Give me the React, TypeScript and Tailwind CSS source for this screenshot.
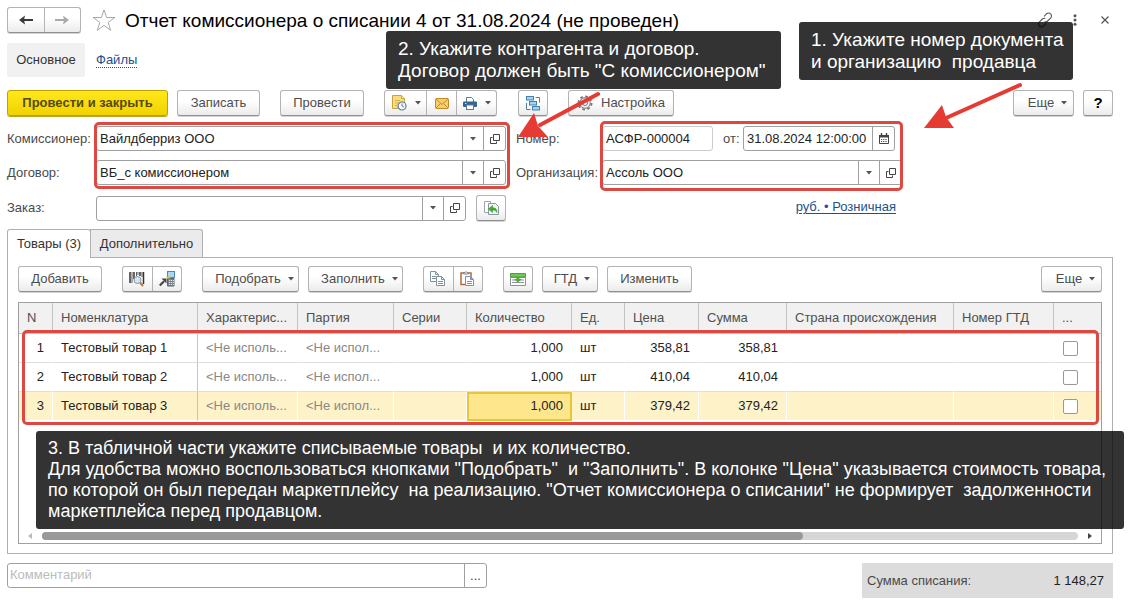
import React from "react";
import clsx from "clsx";

type Align = "left" | "right";

const columns: { title: string; width: string; align?: Align }[] = [
  { title: "N", width: "w-[34px]", align: "right" },
  { title: "Номенклатура", width: "w-[145px]" },
  { title: "Характерис...", width: "w-[100px]" },
  { title: "Партия", width: "w-[96px]" },
  { title: "Серии", width: "w-[73px]" },
  { title: "Количество", width: "w-[105px]", align: "right" },
  { title: "Ед.", width: "w-[53px]" },
  { title: "Цена", width: "w-[74px]", align: "right" },
  { title: "Сумма", width: "w-[88px]", align: "right" },
  { title: "Страна происхождения", width: "" },
  { title: "Номер ГТД", width: "w-[100px]" },
  { title: "...", width: "w-[47px]" },
];

const rows = [
  ["1", "Тестовый товар 1", "<Не исполь...", "<Не испол...", "", "1,000", "шт", "358,81", "358,81", "", ""],
  ["2", "Тестовый товар 2", "<Не исполь...", "<Не испол...", "", "1,000", "шт", "410,04", "410,04", "", ""],
  ["3", "Тестовый товар 3", "<Не исполь...", "<Не испол...", "", "1,000", "шт", "379,42", "379,42", "", ""],
];

function Caret({ className }: { className?: string }) {
  return (
    <svg viewBox="0 0 6 4" className={clsx("h-[4px] w-[6px] shrink-0", className)} aria-hidden="true">
      <path d="M0 0h6L3 3.6z" fill="#555" />
    </svg>
  );
}

function OpenIcon() {
  return (
    <svg viewBox="0 0 10 10" className="h-[10px] w-[10px]" fill="none" stroke="#444" aria-hidden="true">
      <path d="M3.5.5h6v6h-6z" />
      <path d="M2.5 3.5h-2v6h6v-2" />
    </svg>
  );
}

const buttonLook =
  "border border-[#b3b3b3] border-b-[#8f8f8f] bg-linear-to-b from-white from-40% to-[#ececec] text-[#4d4d4d] shadow-[0_1px_0_#d4d4d4]";

function Button({
  children,
  className,
  label,
}: {
  children: React.ReactNode;
  className?: string;
  label?: string;
}) {
  return (
    <button
      type="button"
      aria-label={label}
      className={clsx(
        "flex h-[26px] shrink-0 items-center justify-center rounded-[3px] whitespace-nowrap",
        buttonLook,
        className
      )}
    >
      {children}
    </button>
  );
}

function ButtonGroup({ children, className }: { children: React.ReactNode; className?: string }) {
  return (
    <div
      className={clsx(
        "flex h-[26px] shrink-0 divide-x divide-[#b3b3b3] overflow-hidden rounded-[3px]",
        buttonLook,
        className
      )}
    >
      {children}
    </div>
  );
}

function GroupItem({
  children,
  className,
  label,
}: {
  children: React.ReactNode;
  className?: string;
  label: string;
}) {
  return (
    <button type="button" aria-label={label} className={clsx("flex items-center justify-center", className)}>
      {children}
    </button>
  );
}

function FieldBox({
  id,
  value,
  className,
  children,
}: {
  id: string;
  value: string;
  className?: string;
  children?: React.ReactNode;
}) {
  return (
    <div
      className={clsx(
        "flex h-[25px] min-w-0 divide-x divide-[#a0a0a0] overflow-hidden rounded-[3px] border border-[#a0a0a0] bg-white",
        className
      )}
    >
      <input id={id} defaultValue={value} className="w-full min-w-0 flex-1 px-[3px] text-[#222] outline-none" />
      {children}
    </div>
  );
}

function Lookup({ id, value, className }: { id: string; value: string; className?: string }) {
  return (
    <FieldBox id={id} value={value} className={className}>
      <button type="button" aria-label="Выбрать" className="flex w-[21px] items-center justify-center">
        <Caret />
      </button>
      <button type="button" aria-label="Открыть" className="flex w-[21px] items-center justify-center">
        <OpenIcon />
      </button>
    </FieldBox>
  );
}

function Highlight({ className }: { className: string }) {
  return (
    <div className={clsx("pointer-events-none absolute z-10 rounded-[5px] border-3 border-[#dd4840]", className)} />
  );
}

function Callout({ className, children }: { className: string; children: React.ReactNode }) {
  return (
    <div
      className={clsx(
        "absolute z-20 rounded-[3px] bg-black/80 px-3 whitespace-pre text-white",
        className
      )}
    >
      {children}
    </div>
  );
}

function Header() {
  return (
    <header className="flex h-6 items-center">
      <ButtonGroup className="w-[74px]">
        <GroupItem label="Назад" className="flex-1">
          <svg viewBox="0 0 14 10" className="h-[10px] w-[14px]">
            <path d="M4 5h10" stroke="#3a3a3a" strokeWidth="2.200" />
            <path d="M0 5l6-4.500L5 5l1 4.500z" fill="#3a3a3a" />
          </svg>
        </GroupItem>
        <GroupItem label="Вперед" className="flex-1">
          <svg viewBox="0 0 14 10" className="h-[10px] w-[14px]">
            <path d="M0 5h10" stroke="#aaa" strokeWidth="2.200" />
            <path d="M14 5L8 .5 9 5 8 9.500z" fill="#aaa" />
          </svg>
        </GroupItem>
      </ButtonGroup>
      <button type="button" aria-label="Избранное" className="ml-[11px]">
        <svg viewBox="0 0 24 22" className="h-[22px] w-6" fill="#fff" stroke="#a8a8a8">
          <path d="M12 1l2.600 7.500h8.300l-6.700 4.900 2.500 7.900-6.700-4.800-6.700 4.800 2.500-7.900L1.100 8.500h8.300z" />
        </svg>
      </button>
      <h1 className="ml-[9px] pt-px text-[19px] whitespace-nowrap text-black">
        Отчет комиссионера о списании 4 от 31.08.2024 (не проведен)
      </h1>
      <div className="ml-auto flex items-center">
        <button type="button" aria-label="Ссылка">
          <svg viewBox="0 0 16 16" className="h-4 w-4" fill="none" stroke="#555" strokeWidth="1.100">
            <path d="M7 4.500l2.400-2.600a2.900 2.900 0 0 1 4.200 0 2.900 2.900 0 0 1 0 4.200L10.600 9a2.900 2.900 0 0 1-3 .6" />
            <path d="M9 11.500l-2.400 2.600a2.900 2.900 0 0 1-4.200 0 2.900 2.900 0 0 1 0-4.200L5.400 7a2.900 2.900 0 0 1 3-.6" />
          </svg>
        </button>
        <button type="button" aria-label="Меню" className="ml-5">
          <svg viewBox="0 0 4 12" className="h-3 w-1" fill="#555">
            <circle cx="2" cy="1.800" r="1.500" />
            <circle cx="2" cy="6" r="1.500" />
            <circle cx="2" cy="10.200" r="1.500" />
          </svg>
        </button>
        <button type="button" aria-label="Закрыть" className="mr-1 ml-6">
          <svg viewBox="0 0 8 8" className="h-2 w-2" stroke="#555" strokeWidth="1.200">
            <path d="M.5.5l7 7M7.500.5l-7 7" />
          </svg>
        </button>
      </div>
    </header>
  );
}

function MainToolbar() {
  return (
    <div className="mt-[13px] flex">
      <button
        type="button"
        className="h-[26px] w-[161px] shrink-0 rounded-[3px] border border-[#c0a000] bg-linear-to-b from-[#ffe81a] to-[#f2d200] font-bold whitespace-nowrap text-[#554a10] shadow-[0_1px_0_#b9a22a]"
      >
        Провести и закрыть
      </button>
      <Button className="ml-[9px] w-[83px]">Записать</Button>
      <Button className="ml-5 w-[84px]">Провести</Button>
      <ButtonGroup className="ml-5 w-[113px]">
        <GroupItem label="Создать на основании" className="w-[42px] gap-2">
          <svg viewBox="0 0 16 16" className="h-4 w-4" aria-hidden="true">
            <path d="M1.500.5h9l3 3v10h-12z" fill="#f7dc82" stroke="#c9a343" />
            <path d="M10.500.5v3h3" fill="#fff3c0" stroke="#c9a343" />
            <path d="M4 5.500h5M4 8h4M4 10.500h2" stroke="#d8b252" />
            <circle cx="11" cy="11" r="4" fill="#f4f8fb" stroke="#5f7d95" strokeWidth="1.200" />
            <path d="M11 8.500V11l1.800 1" stroke="#5f7d95" fill="none" />
          </svg>
          <Caret />
        </GroupItem>
        <GroupItem label="Отправить" className="w-[30px]">
          <svg viewBox="0 0 14 11" className="h-[11px] w-[14px]" aria-hidden="true">
            <rect x=".5" y=".5" width="13" height="10" rx="1" fill="#f7cf6a" stroke="#c38a2c" />
            <path d="M1 1l6 5.500L13 1M1 10l4.500-4.500M13 10L8.500 5.500" stroke="#c38a2c" fill="none" />
          </svg>
        </GroupItem>
        <GroupItem label="Печать" className="flex-1 gap-2">
          <svg viewBox="0 0 14 13" className="h-[13px] w-[14px]" aria-hidden="true">
            <path d="M3.500.5h5l2 2v3h-7z" fill="#fff" stroke="#5b7c98" />
            <rect x="0" y="4.500" width="14" height="5.500" rx="1" fill="#346493" />
            <rect x="3.500" y="8" width="7" height="4.500" fill="#fff" stroke="#5b7c98" />
            <path d="M2 6.500h1.500" stroke="#cfe0ee" />
          </svg>
          <Caret />
        </GroupItem>
      </ButtonGroup>
      <Button label="Структура подчиненности" className="ml-[21px] w-[30px]">
        <svg viewBox="0 0 16 15" className="h-[15px] w-4" aria-hidden="true">
          <path d="M10.500 1.500h4v5M1.500 7v6.500h4" fill="none" stroke="#4d7f9f" />
          <rect x="1.500" y=".5" width="7" height="3.500" fill="#a6d2ee" stroke="#4382ae" />
          <rect x="4.500" y="5.500" width="7" height="3.500" fill="#a6d2ee" stroke="#4382ae" />
          <rect x="7.500" y="10.500" width="7" height="3.500" fill="#a6d2ee" stroke="#4382ae" />
        </svg>
      </Button>
      <Button className="ml-5 w-[106px] gap-2">
        <svg viewBox="0 0 16 16" className="h-4 w-4" fill="none" stroke="#777" aria-hidden="true">
          <circle cx="8" cy="8" r="6.600" strokeWidth="1.800" strokeDasharray="2.700 2.480" />
          <circle cx="8" cy="8" r="5.300" fill="#eee" />
          <circle cx="8" cy="8" r="2.500" fill="#fff" />
        </svg>
        Настройка
      </Button>
      <Button className="ml-auto w-[61px] gap-[7px] pl-2">
        Еще <Caret />
      </Button>
      <Button className="ml-[9px] w-[30px] text-[15px] font-bold text-black">?</Button>
    </div>
  );
}

function DocumentFields() {
  return (
    <div className="mt-[10px] grid grid-cols-[499fr_386fr_201fr] gap-x-[10px]">
      <div>
        <div className="relative grid grid-cols-[89px_1fr] items-center gap-y-[9px] text-[#4a4a4a]">
          <label htmlFor="commissioner">Комиссионер:</label>
          <Lookup id="commissioner" value="Вайлдберриз ООО" />
          <label htmlFor="contract">Договор:</label>
          <Lookup id="contract" value="ВБ_с комиссионером" />
          <Highlight className="-top-1 -right-1 -bottom-1 left-[87px]" />
        </div>
        <div className="mt-[10px] flex items-center text-[#4a4a4a]">
          <label htmlFor="order" className="w-[89px] shrink-0">
            Заказ:
          </label>
          <Lookup id="order" value="" className="flex-1" />
          <Button label="Заполнить по заказу" className="ml-[10px] w-[30px]">
            <svg viewBox="0 0 15 14" className="h-[14px] w-[15px]" aria-hidden="true">
              <path d="M.5.500h6v11h-6z" fill="#fff" stroke="#9aa5ad" />
              <path d="M4.500 2.500h7l3 3v8h-10z" fill="#f0f4f6" stroke="#8b979f" />
              <path d="M4.500 8l4-3.500v2.200c3 0 4.500 1.400 4.500 4.800-1-1.800-2-2.400-4.500-2.400v2.300z" fill="#3fae2a" stroke="#2c8a1a" strokeWidth=".5" />
            </svg>
          </Button>
        </div>
      </div>
      <div>
        <div className="relative grid grid-cols-[86px_1fr] items-center gap-y-[9px] text-[#4a4a4a]">
          <label htmlFor="number">Номер:</label>
          <div className="flex items-center pr-[7px]">
            <FieldBox id="number" value="АСФР-000004" className="w-[111px] shrink-0 border-[#ccc]" />
            <label htmlFor="date" className="ml-[10px] w-5 shrink-0">
              от:
            </label>
            <FieldBox id="date" value="31.08.2024 12:00:00" className="flex-1">
              <button type="button" aria-label="Календарь" className="flex w-[21px] items-center justify-center">
                <svg viewBox="0 0 10 11" className="h-[11px] w-[10px]" aria-hidden="true">
                  <path d="M.5 2.500h9v8h-9z" fill="#fff" stroke="#444" />
                  <path d="M0 2h10v2.500H0z" fill="#444" />
                  <path d="M2.500 0v2M7.500 0v2" stroke="#444" strokeWidth="1.400" />
                  <path d="M2 6.500h6M2 8.500h6" stroke="#444" strokeDasharray="1.200 1" />
                </svg>
              </button>
            </FieldBox>
          </div>
          <label htmlFor="organization">Организация:</label>
          <Lookup id="organization" value="Ассоль ООО" />
          <Highlight className="-top-[5px] -right-px -bottom-[6px] left-[84px]" />
        </div>
        <div className="mt-[14px] flex justify-end pr-[6px]">
          <a href="#prices" className="text-[#1f4f8c] underline underline-offset-2">
            руб. • Розничная
          </a>
        </div>
      </div>
    </div>
  );
}

function GoodsToolbar() {
  return (
    <div className="flex">
      <Button className="w-[84px]">Добавить</Button>
      <ButtonGroup className="ml-5 w-[60px]">
        <GroupItem label="Поиск по штрихкоду" className="flex-1">
          <svg viewBox="0 0 16 16" className="h-4 w-4" aria-hidden="true">
            <path d="M1 1v11M5 1v7M11 1v4M14.500 1v12" stroke="#333" strokeWidth="1.500" />
            <path d="M3 1v11M7.500 1v4M9 1v3M13 1v5" stroke="#333" strokeWidth=".8" />
            <path d="M11 11.500l3 3.500" stroke="#b77a3c" strokeWidth="2" />
            <circle cx="8.500" cy="9" r="3.500" fill="#d6e4ee" stroke="#8a98a3" />
          </svg>
        </GroupItem>
        <GroupItem label="Загрузить из ТСД" className="flex-1">
          <svg viewBox="0 0 16 16" className="h-4 w-4" aria-hidden="true">
            <rect x="8.500" y=".5" width="7" height="6" fill="#a9d8f7" stroke="#4d86b0" />
            <path d="M8.500 7.500h6.500v7.500h-6.500z" fill="#75838c" stroke="#59656d" />
            <path d="M10 9.500h5M10 11.500h5M10 13.500h5" stroke="#dfe6ea" strokeDasharray="1.200 .7" />
            <path d="M7.500 6.500h4" stroke="#e0bd3d" strokeWidth="2" />
            <path d="M.8 14.500L5 10.300" stroke="#444" strokeWidth="2.200" />
            <path d="M2.500 7.500h5v5z" fill="#444" />
          </svg>
        </GroupItem>
      </ButtonGroup>
      <Button className="ml-5 w-[97px] gap-[7px] pl-2">
        Подобрать <Caret />
      </Button>
      <Button className="ml-[9px] w-[95px] gap-[7px] pl-2">
        Заполнить <Caret />
      </Button>
      <ButtonGroup className="ml-5 w-[60px]">
        <GroupItem label="Копировать" className="flex-1">
          <svg viewBox="0 0 16 16" className="h-4 w-4" fill="#fff" stroke="#7f929e" aria-hidden="true">
            <path d="M.5.500h5l3 3v7h-8zM5.500.500v3h3M2 5.500h4M2 7.500h4" />
            <path d="M6.500 5.500h5l3 3v6h-8zM11.500 5.500v3h3M8 10.500h5M8 12.500h5" />
          </svg>
        </GroupItem>
        <GroupItem label="Вставить" className="flex-1">
          <svg viewBox="0 0 15 16" className="h-4 w-[15px]" fill="#fff" aria-hidden="true">
            <path d="M1 2h10v11.500H1z" stroke="#b5693a" strokeWidth="1.500" />
            <path d="M3.500 3V1.500H5L6 .5l1 1h1.500V3z" fill="#ddd" stroke="#888" />
            <path d="M5.500 5.500h5l3 3v6h-8zM10.500 5.500v3h3M7 10.500h5M7 12.500h5" stroke="#7f8fae" />
          </svg>
        </GroupItem>
      </ButtonGroup>
      <Button label="Загрузить из файла" className="ml-5 w-[30px]">
        <svg viewBox="0 0 16 13" className="h-[13px] w-4" aria-hidden="true">
          <path d="M.5 4.500h15v8H.5z" fill="#fff" stroke="#88929a" />
          <path d="M2 7h12M2 9.500h12" stroke="#88929a" />
          <path d="M.5.500h15v3.500H.5z" fill="#74c655" stroke="#4ea033" />
          <path d="M6.500 4h3v2H12L8 9.500 4 6h2.500z" fill="#4eae32" />
        </svg>
      </Button>
      <Button className="ml-[9px] w-14 gap-[7px] pl-1">
        ГТД <Caret />
      </Button>
      <Button className="ml-[9px] w-[85px]">Изменить</Button>
      <Button className="ml-auto w-[61px] gap-[7px] pl-2">
        Еще <Caret />
      </Button>
    </div>
  );
}

function GoodsTable() {
  return (
    <div className="relative mt-[10px] border border-[#a0a0a0]">
      <table className="w-full table-fixed border-separate border-spacing-0">
        <thead>
          <tr className="h-[31px] bg-[#f1f1f1] text-[#505050]">
            {columns.map((column, i) => (
              <th
                key={column.title}
                className={clsx(
                  "overflow-hidden border-b border-[#c4c4c4] px-2 text-left font-normal whitespace-nowrap",
                  i < columns.length - 1 && "border-r",
                  column.width
                )}
              >
                {column.title}
              </th>
            ))}
          </tr>
        </thead>
        <tbody>
          {rows.map((row, r) => {
            const selected = r === rows.length - 1;
            return (
              <tr key={row[0]} className={clsx("h-[29px] text-[#222]", selected && "bg-[#fdf2c8]")}>
                {row.map((cell, i) => (
                  <td
                    key={columns[i].title}
                    className={clsx(
                      "overflow-hidden border-b whitespace-nowrap",
                      selected ? "border-b-white" : "border-b-[#dedede]",
                      i === 1 && "border-r border-r-[#c4c4c4]",
                      i !== 1 && "border-r",
                      i !== 1 && (selected ? "border-r-white" : "border-r-transparent"),
                      columns[i].align === "right" ? "pr-2 text-right" : "px-2",
                      (i === 2 || i === 3) && "text-[#888]",
                      selected && i === 5 && "bg-[#fde68c] outline-2 -outline-offset-2 outline-[#e8c63c]"
                    )}
                  >
                    {cell}
                  </td>
                ))}
                <td className={clsx("border-b px-[9px]", selected ? "border-b-white" : "border-b-[#dedede]")}>
                  <input
                    type="checkbox"
                    aria-label={`Отметить строку ${row[0]}`}
                    className="block h-[15px] w-[15px] appearance-none rounded-[2px] border border-[#999] bg-white"
                  />
                </td>
              </tr>
            );
          })}
        </tbody>
      </table>
      <Highlight className="top-[27px] right-[2px] left-[3px] h-[95px]" />
      <div className="mt-[111px] flex h-2 items-center px-[9px]">
        <svg viewBox="0 0 4 6" className="h-[6px] w-1">
          <path d="M4 0v6L0 3z" fill="#bbb" />
        </svg>
        <div className="mx-[10px] h-2 flex-1 rounded-full bg-[#d6d6d6]">
          <div className="h-2 w-[73.5%] rounded-full bg-[#999]" />
        </div>
        <svg viewBox="0 0 4 6" className="h-[6px] w-1">
          <path d="M0 0v6l4-3z" fill="#444" />
        </svg>
      </div>
      <div className="h-[3px]" />
    </div>
  );
}

function Footer() {
  return (
    <footer className="mt-[9px] flex items-start justify-between">
      <div className="flex h-[25px] w-[480px] divide-x divide-[#a0a0a0] rounded-[3px] border border-[#a0a0a0]">
        <input
          aria-label="Комментарий"
          placeholder="Комментарий"
          className="min-w-0 flex-1 px-[2px] pb-[2px] outline-none placeholder:text-[#bbb]"
        />
        <button type="button" aria-label="Открыть комментарий" className="w-[21px] text-[#444]">
          ...
        </button>
      </div>
      <div className="flex h-[35px] w-[251px] items-center justify-between bg-[#dcdcdc] pr-[9px] pl-[5px] text-[#4a4a4a]">
        <span>Сумма списания:</span>
        <span className="text-[#222]">1 148,27</span>
      </div>
    </footer>
  );
}

export default function App() {
  return (
    <div className="relative min-h-screen overflow-hidden bg-white pt-2 pr-[25px] pb-[7px] pl-[7px] font-['Liberation_Sans',Arial,sans-serif] text-[13px] leading-4">
      <Header />
      <nav className="mt-[11px] flex h-[34px] items-center gap-[11px]">
        <a href="#main" className="flex h-full w-[78px] items-center justify-center rounded-[2px] bg-[#f1f1f1] text-[#333]">
          Основное
        </a>
        <a href="#files" className="border-b border-dotted border-[#1f4f8c] leading-[14px] text-[#1f4f8c]">
          Файлы
        </a>
      </nav>
      <MainToolbar />
      <DocumentFields />

      <div className="relative mt-2 flex h-7" role="tablist">
        <button
          type="button"
          role="tab"
          aria-selected="true"
          className="relative z-1 -mb-px w-[84px] rounded-t-[3px] border border-b-0 border-[#b0b0b0] bg-white text-[#333]"
        >
          Товары (3)
        </button>
        <button
          type="button"
          role="tab"
          aria-selected="false"
          className="-ml-px w-[113px] rounded-tr-[3px] border border-b-0 border-[#b0b0b0] bg-[#ebebeb] text-[#333]"
        >
          Дополнительно
        </button>
      </div>
      <section className="border border-[#b0b0b0] px-[10px] pt-2 pb-[9px]">
        <GoodsToolbar />
        <GoodsTable />
      </section>
      <Footer />

      <Callout className="top-[22px] left-[799px] w-[274px] py-[7px] text-[19px] leading-[22px]">
        {"1. Укажите номер документа\nи организацию  продавца"}
      </Callout>
      <Callout className="top-[31px] left-[386px] w-[395px] py-[7px] text-[19px] leading-[22px]">
        {"2. Укажите контрагента и договор.\nДоговор должен быть \"С комиссионером\""}
      </Callout>
      <Callout className="top-[431px] left-[36px] w-[1088px] py-[7px] text-[18px] leading-[21px]">
        {
          "3. В табличной части укажите списываемые товары  и их количество.\nДля удобства можно воспользоваться кнопками \"Подобрать\"  и \"Заполнить\". В колонке \"Цена\" указывается стоимость товара,\nпо которой он был передан маркетплейсу  на реализацию. \"Отчет комиссионера о списании\" не формирует  задолженности\nмаркетплейса перед продавцом."
        }
      </Callout>
      <svg
        viewBox="0 0 510 60"
        className="pointer-events-none absolute top-20 left-[516px] z-20 h-[60px] w-[510px]"
        aria-hidden="true"
      >
        <g fill="#e53b32" stroke="#e53b32">
          <path d="M82 14L24 45M504 5L430 38" strokeWidth="4" strokeLinecap="round" />
          <path d="M2 57L18 33l4 13 10 11zM408 48l18-23 4 12 8 11z" stroke="none" />
        </g>
      </svg>
    </div>
  );
}
